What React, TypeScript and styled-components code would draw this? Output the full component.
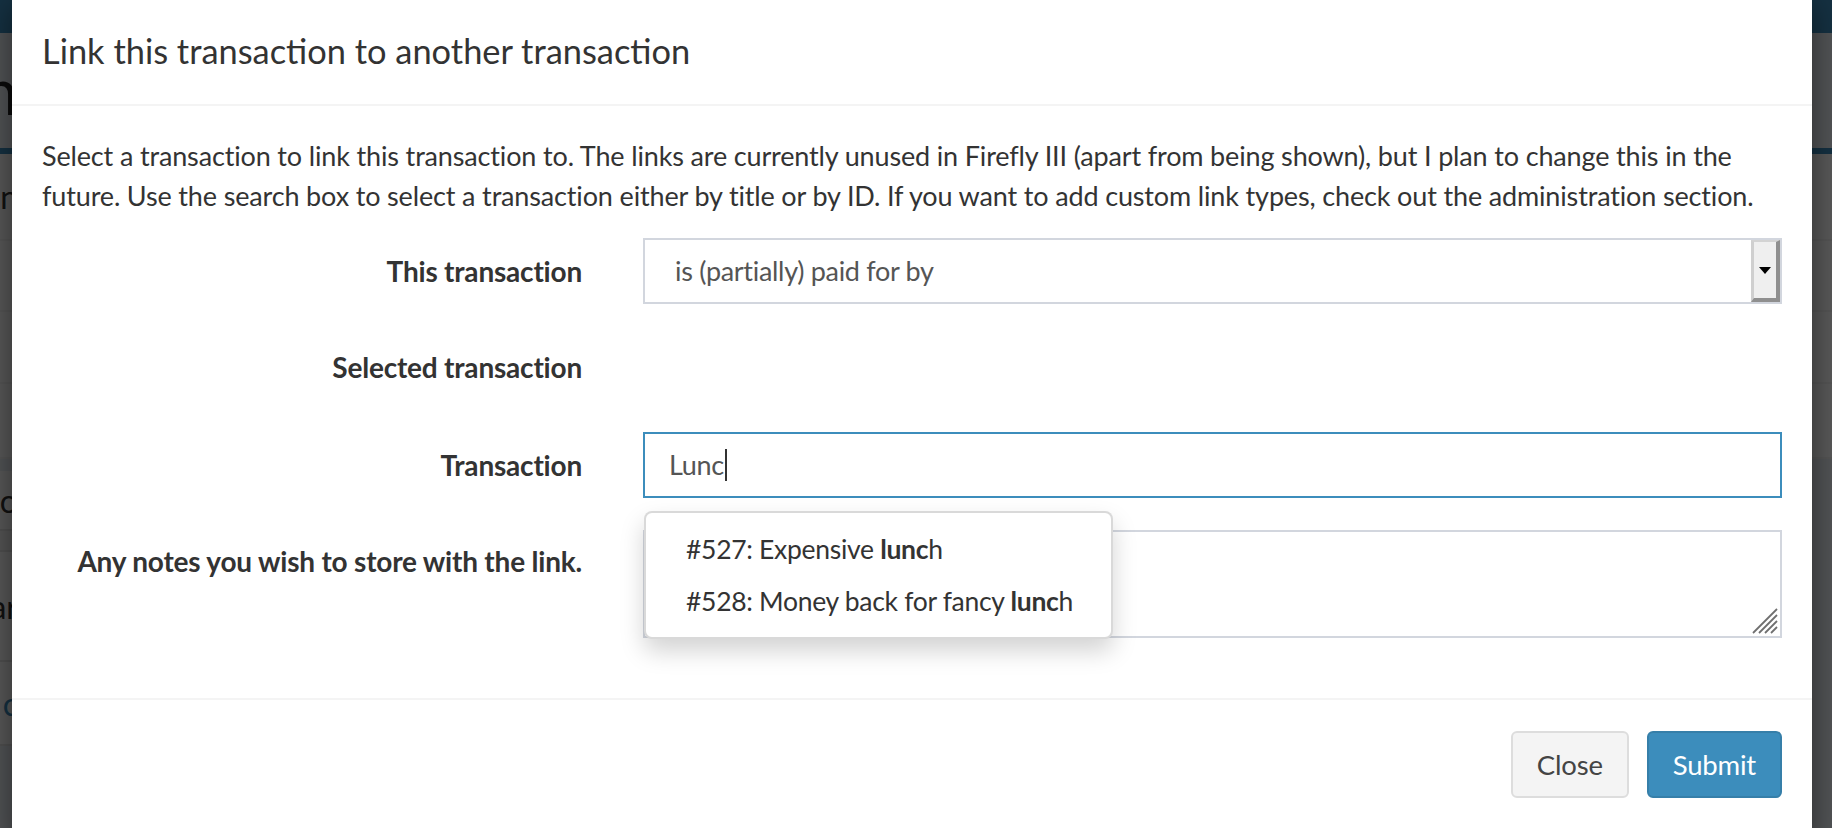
import React from "react";
import styled, { createGlobalStyle } from "styled-components";

const GlobalStyle = createGlobalStyle`
  html, body { margin: 0; padding: 0; width: 1832px; height: 828px; overflow: hidden; }
  body { font-family: Lato, "Open Sans", sans-serif; color: #333; }
  * { box-sizing: border-box; }
`;

/* ---------- background page (dimmed) ---------- */
const Page = styled.div`
  position: relative;
  width: 1832px;
  height: 828px;
  overflow: hidden;
  background: #ecf0f5;
  display: flex;
  flex-direction: column;
`;

const TopBar = styled.div`
  height: 33px;
  flex: none;
  background: #3c8dbc;
`;

const PageHeading = styled.div`
  height: 115px;
  flex: none;
  width: 18px;
  display: flex;
  justify-content: flex-end;
  align-items: center;
  font-size: 64px;
  white-space: nowrap;
  color: #222;
`;

const Box = styled.div`
  flex: none;
  height: 311px;
  background: #fff;
  border-top: 6px solid #3c8dbc;
  display: flex;
  flex-direction: column;
`;

const BoxRow = styled.div<{ $h: number }>`
  height: ${(p) => p.$h}px;
  flex: none;
  border-bottom: 2px solid #f4f4f4;
  display: flex;
  align-items: center;
`;

const GutterText = styled.div<{ $color?: string }>`
  width: 18px;
  display: flex;
  justify-content: flex-end;
  white-space: nowrap;
  font-size: 32px;
  color: ${(p) => p.$color || "#333"};
`;

const LowerArea = styled.div`
  flex: 1;
  display: flex;
  flex-direction: column;
  padding-top: 12px;
`;

const LowerRow = styled.div<{ $h: number; $bg?: string }>`
  height: ${(p) => p.$h}px;
  flex: none;
  width: 40px;
  background: ${(p) => p.$bg || "#fff"};
  border-bottom: 2px solid #e4e4e4;
  display: flex;
  align-items: center;
`;

const Backdrop = styled.div`
  position: absolute;
  inset: 0;
  background: rgba(0, 0, 0, 0.65);
`;

/* ---------- modal ---------- */
const Modal = styled.div`
  position: absolute;
  left: 12px;
  top: -6px;
  width: 1800px;
  background: #fff;
  box-shadow: 0 10px 30px rgba(0, 0, 0, 0.5);
`;

const ModalHeader = styled.div`
  padding: 31px 30px 28px;
  border-bottom: 2px solid #f4f4f4;
`;

const Title = styled.h4`
  margin: 0;
  font-size: 34.4px;
  line-height: 51px;
  font-weight: 400;
  color: #333;
`;

const ModalBody = styled.div`
  padding: 30px;
  font-size: 27px;
  line-height: 40px;
  letter-spacing: -0.3px;
`;

const Intro = styled.p`
  margin: 0 0 22px;
  color: #333;
  letter-spacing: -0.15px;
`;

const FormGroup = styled.div`
  display: grid;
  grid-template-columns: 540px 1fr;
  column-gap: 61px;
  margin-bottom: 30px;
`;

const Label = styled.label`
  text-align: right;
  font-weight: 700;
  font-size: 28px;
  letter-spacing: -0.2px;
  padding-top: 13px;
  color: #333;
`;

const StaticValue = styled.div`
  min-height: 68px;
`;

const SelectBox = styled.div`
  height: 66px;
  border: 2px solid #d2d6de;
  display: flex;
  align-items: stretch;
  background: #fff;
`;

const SelectValue = styled.div`
  flex: 1;
  padding-left: 30px;
  display: flex;
  align-items: center;
  color: #555;
`;

const SelectButton = styled.div`
  width: 29px;
  background: #efefef;
  border-style: solid;
  border-width: 2px 4px 4px 3px;
  border-color: #d3d3d3 #8f8f8f #8f8f8f #cfcfcf;
  display: flex;
  align-items: center;
  justify-content: center;
`;

const Arrow = styled.div`
  width: 0;
  height: 0;
  border-left: 6px solid transparent;
  border-right: 6px solid transparent;
  border-top: 7px solid #000;
`;

const InputWrap = styled.div`
  position: relative;
`;

const TextInput = styled.div`
  height: 66px;
  border: 2px solid #3c8dbc;
  padding: 0 24px;
  display: flex;
  align-items: center;
  color: #555;
`;

const Caret = styled.span`
  display: inline-block;
  width: 2px;
  height: 32px;
  background: #333;
  margin-left: 1px;
`;

const Dropdown = styled.ul`
  position: absolute;
  left: 1px;
  top: 79px;
  width: 469px;
  margin: 0;
  padding: 10px 0;
  list-style: none;
  background: #fff;
  border: 2px solid rgba(0, 0, 0, 0.15);
  border-radius: 8px;
  box-shadow: 0 12px 24px rgba(0, 0, 0, 0.175);
  z-index: 2;
`;

const DropItem = styled.li`
  padding: 6px 40px;
  line-height: 40px;
  font-size: 26.5px;
  color: #333;
  white-space: nowrap;
  b { font-weight: 700; }
`;

const TextArea = styled.div`
  position: relative;
  height: 108px;
  margin-top: 2px;
  border: 2px solid #d2d6de;
`;

const ResizeHandle = styled.svg`
  position: absolute;
  right: 2px;
  bottom: 2px;
`;

const ModalFooter = styled.div`
  border-top: 2px solid #f4f4f4;
  padding: 31px 30px 40px;
  display: flex;
  justify-content: flex-end;
  gap: 18px;
`;

const Button = styled.button<{ $primary?: boolean }>`
  font-family: inherit;
  font-size: 27.5px;
  line-height: 40px;
  letter-spacing: -0.2px;
  height: 67px;
  padding: 0 24px;
  border-radius: 6px;
  border: 2px solid ${(p) => (p.$primary ? "#367fa9" : "#ddd")};
  background: ${(p) => (p.$primary ? "#3c8dbc" : "#f4f4f4")};
  color: ${(p) => (p.$primary ? "#fff" : "#444")};
`;

export default function App() {
  return (
    <>
      <GlobalStyle />
      <Page>
        <TopBar />
        <PageHeading>Transaction</PageHeading>
        <Box>
          <BoxRow $h={87}>
            <GutterText>Description</GutterText>
          </BoxRow>
          <BoxRow $h={71} />
          <BoxRow $h={72} />
          <BoxRow $h={75} />
        </Box>
        <LowerArea>
          <LowerRow $h={60}>
            <GutterText>Budgeto</GutterText>
          </LowerRow>
          <LowerRow $h={21} $bg="#f4f4f4" />
          <LowerRow $h={110}>
            <GutterText>Categ ar</GutterText>
          </LowerRow>
          <LowerRow $h={84}>
            <GutterText $color="#3c8dbc">c</GutterText>
          </LowerRow>
        </LowerArea>
        <Backdrop />
        <Modal>
          <ModalHeader>
            <Title>Link this transaction to another transaction</Title>
          </ModalHeader>
          <ModalBody>
            <Intro>
              Select a transaction to link this transaction to. The links are currently unused in Firefly III
              (apart from being shown), but I plan to change this in the
              <br />
              future. Use the search box to select a transaction either by title or by ID. If you want to add
              custom link types, check out the administration section.
            </Intro>
            <FormGroup>
              <Label>This transaction</Label>
              <SelectBox>
                <SelectValue>is (partially) paid for by</SelectValue>
                <SelectButton>
                  <Arrow />
                </SelectButton>
              </SelectBox>
            </FormGroup>
            <FormGroup>
              <Label>Selected transaction</Label>
              <StaticValue />
            </FormGroup>
            <FormGroup>
              <Label>Transaction</Label>
              <InputWrap>
                <TextInput>
                  Lunc
                  <Caret />
                </TextInput>
                <Dropdown>
                  <DropItem>
                    #527: Expensive <b>lunc</b>h
                  </DropItem>
                  <DropItem>
                    #528: Money back for fancy <b>lunc</b>h
                  </DropItem>
                </Dropdown>
              </InputWrap>
            </FormGroup>
            <FormGroup>
              <Label>Any notes you wish to store with the link.</Label>
              <TextArea>
                <ResizeHandle width="28" height="28" viewBox="0 0 28 28">
                  <g stroke="#6f6f6f" strokeWidth="1.8" strokeLinecap="butt">
                    <line x1="3" y1="27" x2="27" y2="3" />
                    <line x1="9" y1="27" x2="27" y2="9" />
                    <line x1="15" y1="27" x2="27" y2="15" />
                    <line x1="21" y1="27" x2="27" y2="21" />
                  </g>
                </ResizeHandle>
              </TextArea>
            </FormGroup>
          </ModalBody>
          <ModalFooter>
            <Button>Close</Button>
            <Button $primary>Submit</Button>
          </ModalFooter>
        </Modal>
      </Page>
    </>
  );
}
